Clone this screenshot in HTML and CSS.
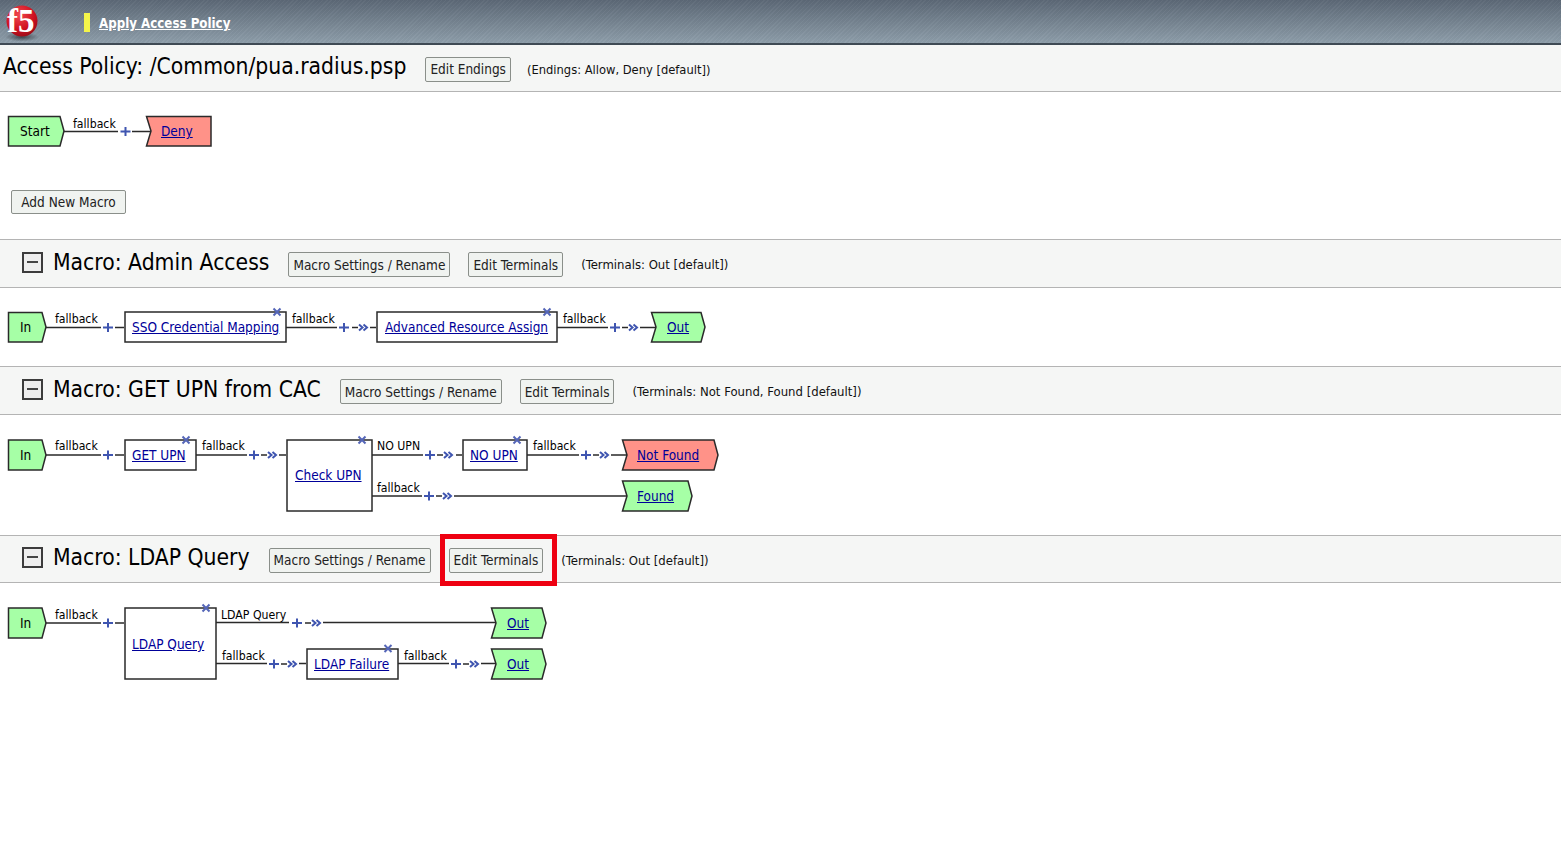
FILE: index.html
```html
<!DOCTYPE html>
<html lang="en">
    <head>
        <title>Access Policy</title>
        <meta charset="utf-8" />
        <link rel="stylesheet" href="styles.css">
    </head>
    <body>
        <!-- shared diagram parts -->
        <svg class="defs" width="0" height="0">
            <defs>
                <path id="plus" d="M-5 0H5M0 -4.500V4.500" />
                <g id="arrows">
                    <path class="arrow-dash" d="M-12 0H-6" />
                    <path class="arrow-head" d="M-5 -3L-1.500 0L-5 3M-0.500 -3L3 0L-0.500 3" />
                </g>
                <path id="cross" d="M-3.500 -3.500L3.500 3.500M3.500 -3.500L-3.500 3.500" />
            </defs>
        </svg>

        <header class="topbar">
            <svg class="logo" width="42" height="43" viewBox="0 0 42 43">
                <defs>
                    <radialGradient id="ball" cx="0.4" cy="0.3" r="0.8">
                        <stop offset="0" stop-color="#f0484e" />
                        <stop offset="0.6" stop-color="#cf1020" />
                        <stop offset="1" stop-color="#8c0c16" />
                    </radialGradient>
                    <radialGradient id="shade">
                        <stop offset="0" stop-color="#2c3238" stop-opacity="0.8" />
                        <stop offset="1" stop-color="#2c3238" stop-opacity="0" />
                    </radialGradient>
                </defs>
                <ellipse cx="22" cy="37" rx="17" ry="4.500" fill="url(#shade)" />
                <circle cx="22" cy="21" r="15.500" fill="url(#ball)" />
                <text x="7" y="32" class="logo-text">f5</text>
            </svg>
            <span class="marker"></span>
            <a class="apply" href="#">Apply Access Policy</a>
        </header>

        <div class="titlebar policybar">
            <h1>Access Policy: /Common/pua.radius.psp</h1>
            <button class="btn">Edit Endings</button>
            <span class="note note-tight">(Endings: Allow, Deny [default])</span>
        </div>

        <div class="canvas canvas-main">
            <svg class="wires" width="700" height="147">
                <polygon class="good" points="8.500,24.500 60,24.500 64,39 60,54 8.500,54" />
                <polygon class="bad" points="146.500,24.500 211,24.500 211,54 146.500,54 151,39" />
                <path class="wire" d="M64 39.500H118M132 39.500H151" />
                <use class="plus" href="#plus" x="125.500" y="39.500" />
            </svg>
            <span class="term-text" style="left: 20px; top: 31px">Start</span>
            <span class="label" style="left: 73px; top: 24px">fallback</span>
            <a class="link" style="left: 161px; top: 31px" href="#">Deny</a>
            <button class="btn add">Add New Macro</button>
        </div>

        <div class="titlebar macrobar">
            <span class="toggle"></span>
            <h2>Macro: Admin Access</h2>
            <button class="btn">Macro Settings / Rename</button>
            <button class="btn">Edit Terminals</button>
            <span class="note">(Terminals: Out [default])</span>
        </div>
        <div class="canvas canvas-admin">
            <svg class="wires" width="720" height="78">
                <polygon class="good" points="8.500,24.500 42,24.500 46,39 42,54 8.500,54" />
                <rect class="node" x="125" y="24" width="161" height="30" />
                <rect class="node" x="377" y="24" width="180" height="30" />
                <polygon class="good" points="651.500,24.500 701,24.500 705,39 701,54 651.500,54 656,39" />
                <path class="wire" d="M46 39.500H101M115 39.500H124M286 39.500H337M370 39.500H376M557 39.500H608M640 39.500H656" />
                <use class="plus" href="#plus" x="108" y="39.500" />
                <use class="plus" href="#plus" x="344" y="39.500" />
                <use class="arrows" href="#arrows" x="364" y="39.500" />
                <use class="plus" href="#plus" x="615" y="39.500" />
                <use class="arrows" href="#arrows" x="634" y="39.500" />
                <use class="cross" href="#cross" x="277" y="24" />
                <use class="cross" href="#cross" x="547" y="24" />
            </svg>
            <span class="term-text" style="left: 20px; top: 31px">In</span>
            <span class="label" style="left: 55px; top: 23px">fallback</span>
            <a class="link" style="left: 132px; top: 31px" href="#">SSO Credential Mapping</a>
            <span class="label" style="left: 292px; top: 23px">fallback</span>
            <a class="link" style="left: 385px; top: 31px" href="#">Advanced Resource Assign</a>
            <span class="label" style="left: 563px; top: 23px">fallback</span>
            <a class="link" style="left: 667px; top: 31px" href="#">Out</a>
        </div>

        <div class="titlebar macrobar">
            <span class="toggle"></span>
            <h2>Macro: GET UPN from CAC</h2>
            <button class="btn">Macro Settings / Rename</button>
            <button class="btn">Edit Terminals</button>
            <span class="note">(Terminals: Not Found, Found [default])</span>
        </div>
        <div class="canvas canvas-upn">
            <svg class="wires" width="740" height="120">
                <polygon class="good" points="8.500,25 42,25 46,40 42,55 8.500,55" />
                <rect class="node" x="125" y="25" width="71" height="30" />
                <rect class="node" x="287" y="25" width="85" height="71" />
                <rect class="node" x="463" y="25" width="64" height="30" />
                <polygon class="bad" points="622.500,25 714,25 718,40 714,55 622.500,55 627,40" />
                <polygon class="good" points="622.500,66 688,66 692,81 688,96 622.500,96 627,81" />
                <path class="wire" d="M46 40H101M115 40H124M196 40H247M279 40H286M372 40H423M456 40H462M527 40H579M611 40H627M372 81H422M454 81H627" />
                <use class="plus" href="#plus" x="108" y="40" />
                <use class="plus" href="#plus" x="254" y="40" />
                <use class="arrows" href="#arrows" x="273" y="40" />
                <use class="plus" href="#plus" x="430" y="40" />
                <use class="arrows" href="#arrows" x="449" y="40" />
                <use class="plus" href="#plus" x="586" y="40" />
                <use class="arrows" href="#arrows" x="605" y="40" />
                <use class="plus" href="#plus" x="429" y="81" />
                <use class="arrows" href="#arrows" x="448" y="81" />
                <use class="cross" href="#cross" x="186" y="25" />
                <use class="cross" href="#cross" x="362" y="25" />
                <use class="cross" href="#cross" x="517" y="25" />
            </svg>
            <span class="term-text" style="left: 20px; top: 32px">In</span>
            <span class="label" style="left: 55px; top: 23px">fallback</span>
            <a class="link" style="left: 132px; top: 32px" href="#">GET UPN</a>
            <span class="label" style="left: 202px; top: 23px">fallback</span>
            <a class="link" style="left: 295px; top: 52px" href="#">Check UPN</a>
            <span class="label" style="left: 377px; top: 23px">NO UPN</span>
            <a class="link" style="left: 470px; top: 32px" href="#">NO UPN</a>
            <span class="label" style="left: 533px; top: 23px">fallback</span>
            <a class="link" style="left: 637px; top: 32px" href="#">Not Found</a>
            <span class="label" style="left: 377px; top: 65px">fallback</span>
            <a class="link" style="left: 637px; top: 73px" href="#">Found</a>
        </div>

        <div class="titlebar macrobar macrobar-last">
            <span class="toggle"></span>
            <h2>Macro: LDAP Query</h2>
            <button class="btn">Macro Settings / Rename</button>
            <button class="btn">Edit Terminals</button>
            <span class="note">(Terminals: Out [default])</span>
            <span class="highlight"></span>
        </div>
        <div class="canvas canvas-ldap">
            <svg class="wires" width="600" height="120">
                <polygon class="good" points="8.500,25 42,25 46,40 42,55 8.500,55" />
                <rect class="node" x="125" y="25" width="91" height="71" />
                <rect class="node" x="307" y="66" width="91" height="30" />
                <polygon class="good" points="491.500,25 542,25 546,40 542,55 491.500,55 496,40" />
                <polygon class="good" points="491.500,66 542,66 546,81 542,96 491.500,96 496,81" />
                <path class="wire" d="M46 40H101M115 40H124M216 39.500H289M323 39.500H496M216 80.500H267M299 80.500H306M398 80.500H449M481 80.500H496" />
                <use class="plus" href="#plus" x="108" y="40" />
                <use class="plus" href="#plus" x="297" y="40" />
                <use class="arrows" href="#arrows" x="317" y="40" />
                <use class="plus" href="#plus" x="274" y="81" />
                <use class="arrows" href="#arrows" x="293" y="81" />
                <use class="plus" href="#plus" x="456" y="81" />
                <use class="arrows" href="#arrows" x="475" y="81" />
                <use class="cross" href="#cross" x="206" y="25" />
                <use class="cross" href="#cross" x="388" y="65.500" />
            </svg>
            <span class="term-text" style="left: 20px; top: 32px">In</span>
            <span class="label" style="left: 55px; top: 24px">fallback</span>
            <a class="link" style="left: 132px; top: 53px" href="#">LDAP Query</a>
            <span class="label" style="left: 221px; top: 24px">LDAP Query</span>
            <a class="link" style="left: 507px; top: 32px" href="#">Out</a>
            <span class="label" style="left: 222px; top: 65px">fallback</span>
            <a class="link" style="left: 314px; top: 73px" href="#">LDAP Failure</a>
            <span class="label" style="left: 404px; top: 65px">fallback</span>
            <a class="link" style="left: 507px; top: 73px" href="#">Out</a>
        </div>
    </body>
</html>
```

FILE: styles.css
```css
html, body {
    margin: 0;
    padding: 0;
    height: 100%;
    overflow: hidden;
}

body {
    background: #ffffff;
    color: #000000;
    font-family: "DejaVu Sans", Verdana, sans-serif;
    font-stretch: condensed;
    font-size: 13px;
}

.defs {
    position: absolute;
}

.topbar {
    display: flex;
    align-items: center;
    height: 43px;
    border-bottom: 2px solid #3f4a54;
    background:
        repeating-linear-gradient(135deg, rgba(255, 255, 255, 0.03) 0 1px, rgba(0, 0, 0, 0.02) 1px 3px),
        linear-gradient(#5c6876, #8e9eaa);
}

.logo {
    flex: none;
}

.logo-text {
    fill: #ffffff;
    font-family: "Liberation Serif", serif;
    font-weight: bold;
    font-stretch: normal;
    font-size: 33px;
}

.marker {
    width: 6px;
    height: 19px;
    margin-left: 42px;
    margin-top: 2px;
    background: #f4f44a;
}

.apply {
    margin-left: 9px;
    margin-top: 4px;
    color: #ffffff;
    font-size: 13.200px;
    font-weight: bold;
}

.titlebar {
    display: flex;
    align-items: center;
    position: relative;
    box-sizing: border-box;
    background: #f5f6f5;
    border-bottom: 1px solid #b4b4b4;
}

.policybar {
    height: 47px;
    padding-left: 3px;
}

.macrobar {
    height: 49px;
    padding-left: 22px;
    border-top: 1px solid #b4b4b4;
}

.macrobar-last {
    height: 48px;
}

h1, h2 {
    margin: 0 19px 4px 0;
    font-size: 22.700px;
    font-weight: normal;
}

h2 {
    margin-left: 10px;
}

.toggle {
    position: relative;
    box-sizing: border-box;
    width: 21px;
    height: 21px;
    margin-bottom: 3px;
    background: #eeeeee;
    border: 2px solid #3c3c3c;
}

.toggle::after {
    content: "";
    position: absolute;
    left: 3px;
    right: 3px;
    top: 7px;
    height: 2px;
    background: #444444;
}

.btn {
    box-sizing: border-box;
    height: 25px;
    padding: 0 4px;
    margin-top: 2px;
    margin-right: 18px;
    font: inherit;
    font-size: 13.500px;
    color: #222222;
    background: #f0f3f0;
    border: 1px solid #8a8f8a;
    border-radius: 2px;
}

.note {
    margin-top: 2px;
    font-size: 13px;
    color: #111111;
}

.note-tight {
    margin-left: -2px;
    font-size: 12.800px;
}

.highlight {
    position: absolute;
    left: 440px;
    top: -2px;
    width: 117px;
    height: 52px;
    box-sizing: border-box;
    border: 5px solid #ee0011;
}

.canvas {
    position: relative;
}

.canvas-main {
    height: 147px;
}

.canvas-admin {
    height: 78px;
}

.canvas-upn {
    height: 120px;
}

.canvas-ldap {
    height: 120px;
}

.wires {
    position: absolute;
    left: 0;
    top: 0;
}

.good, .bad, .node {
    stroke: #2a2a2a;
    stroke-width: 1.500;
}

.good {
    fill: #a6ffa6;
}

.bad {
    fill: #ff9288;
}

.node {
    fill: #ffffff;
}

.wire {
    fill: none;
    stroke: #2a2a2a;
    stroke-width: 1.500;
}

#plus {
    fill: none;
    stroke: #3f55b0;
    stroke-width: 2;
}

.arrow-dash {
    fill: none;
    stroke: #2a2a2a;
    stroke-width: 1.500;
}

.arrow-head {
    fill: none;
    stroke: #3f55b0;
    stroke-width: 2;
}

#cross {
    fill: none;
    stroke: #5566b8;
    stroke-width: 2;
}

.term-text, .label, .link {
    position: absolute;
    white-space: nowrap;
    line-height: 16px;
}

.term-text, .link {
    font-size: 13.500px;
}

.label {
    font-size: 12.200px;
}

.link {
    color: #000099;
    text-decoration: underline;
}

.add {
    position: absolute;
    left: 11px;
    top: 98px;
    height: 24px;
    width: 115px;
    margin: 0;
    padding: 0;
}
```
